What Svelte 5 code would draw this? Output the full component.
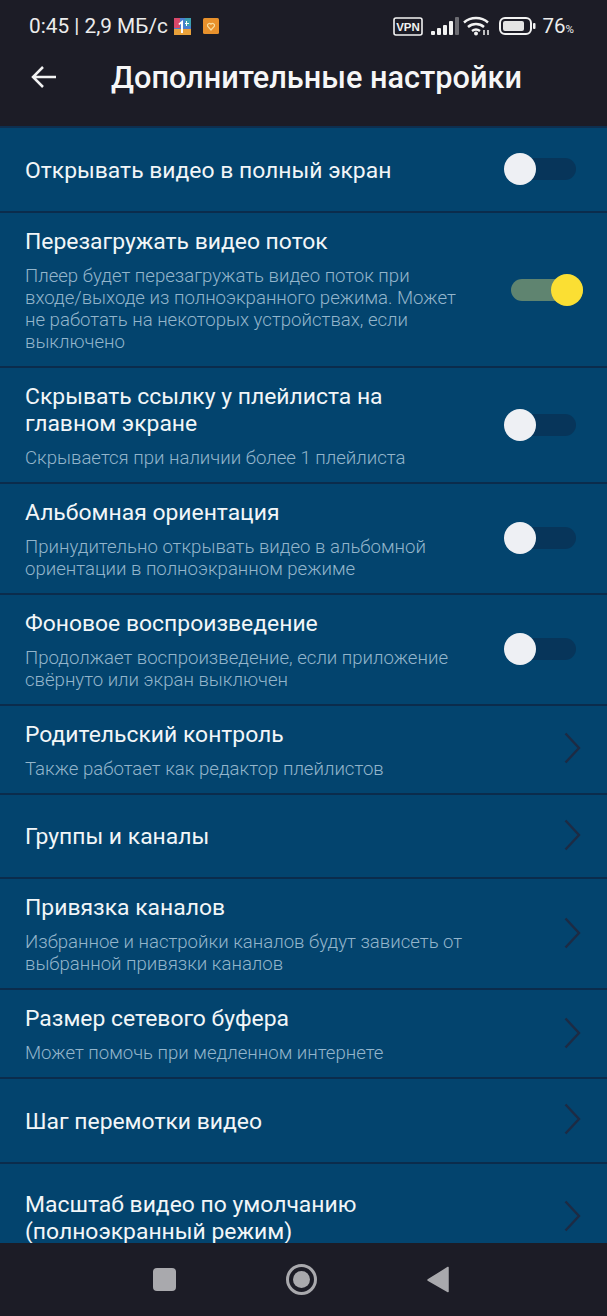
<script>
  const rows = [
    { t: 'Открывать видео в полный экран', sw: 'off' },
    { t: 'Перезагружать видео поток', s: 'Плеер будет перезагружать видео поток при входе/выходе из полноэкранного режима. Может не работать на некоторых устройствах, если выключено', sw: 'on' },
    { t: 'Скрывать ссылку у плейлиста на главном экране', s: 'Скрывается при наличии более 1 плейлиста', sw: 'off' },
    { t: 'Альбомная ориентация', s: 'Принудительно открывать видео в альбомной ориентации в полноэкранном режиме', sw: 'off' },
    { t: 'Фоновое воспроизведение', s: 'Продолжает воспроизведение, если приложение свёрнуто или экран выключен', sw: 'off' },
    { t: 'Родительский контроль', s: 'Также работает как редактор плейлистов' },
    { t: 'Группы и каналы' },
    { t: 'Привязка каналов', s: 'Избранное и настройки каналов будут зависеть от выбранной привязки каналов' },
    { t: 'Размер сетевого буфера', s: 'Может помочь при медленном интернете' },
    { t: 'Шаг перемотки видео' },
    { t: 'Масштаб видео по умолчанию (полноэкранный режим)', tall: true }
  ];
</script>

<div class="page">
  <header class="top">
    <div class="status">
      <div class="left">
        <span class="clock">0:45 | 2,9 МБ/с</span>
        <svg class="app1" width="17" height="17" viewBox="0 0 17 17">
          <rect width="17" height="17" rx="2" fill="#4a7fd0"/>
          <path d="M0 0h6v10H0z" fill="#d8486a"/>
          <path d="M11 0h6v8h-6z" fill="#3a9fb0"/>
          <path d="M0 11h17v6H0z" fill="#e9a13a"/>
          <path d="M4.500 5.500L9 2v13H7V6l-2 1z" fill="#fff"/>
          <path d="M12 3h1v2h2v1h-2v2h-1V6h-1V5h1z" fill="#fff"/>
        </svg>
        <svg class="app2" width="16" height="16" viewBox="0 0 16 16">
          <rect width="16" height="16" rx="1.500" fill="#e8912c"/>
          <path d="M8 12L4.600 8.200a2 2 0 0 1 3.400-2 2 2 0 0 1 3.400 2z" fill="none" stroke="#f7dc9c" stroke-width="1.200"/>
        </svg>
      </div>
      <div class="right">
        <svg class="vpn" width="30" height="19" viewBox="0 0 30 19">
          <rect x="1" y="1" width="28" height="17" rx="2" fill="none" stroke="#f2f2f2" stroke-width="1.600"/>
          <text x="15" y="13.500" text-anchor="middle" class="vpntext">VPN</text>
        </svg>
        <svg width="28" height="18" viewBox="0 0 28 18">
          <rect x="0" y="14" width="4" height="4" rx="1" fill="#f2f2f2"/>
          <rect x="6" y="11" width="4" height="7" rx="1" fill="#f2f2f2"/>
          <rect x="12" y="8" width="4" height="10" rx="1" fill="#f2f2f2"/>
          <rect x="18" y="4" width="4" height="14" rx="1" fill="#f2f2f2"/>
          <rect x="24" y="0" width="4" height="18" rx="1" fill="#6c6c72"/>
        </svg>
        <svg class="wifi" width="28" height="20" viewBox="0 0 28 20">
          <path d="M1 6.500C7.500 .5 18.500 .5 25 6.500" fill="none" stroke="#f2f2f2" stroke-width="2.400"/>
          <path d="M5 11c4.500-4 11.500-4 16 0" fill="none" stroke="#f2f2f2" stroke-width="2.400"/>
          <path d="M9 15c2.500-2 5.500-2 8 0" fill="none" stroke="#f2f2f2" stroke-width="2.400"/>
          <circle cx="13" cy="17.500" r="2" fill="#f2f2f2"/>
          <path d="M21 14v5M25 14v5" stroke="#f2f2f2" stroke-width="1.500"/>
        </svg>
        <svg class="batt" width="37" height="18" viewBox="0 0 37 18">
          <rect x="1" y="1" width="31" height="16" rx="5" fill="none" stroke="#f2f2f2" stroke-width="2"/>
          <rect x="4" y="4" width="21" height="10" rx="2" fill="#e4e4e4"/>
          <rect x="34" y="6" width="2.500" height="6" rx="1" fill="#f2f2f2"/>
        </svg>
        <span class="pct">76<small>%</small></span>
      </div>
    </div>
    <div class="bar">
      <svg class="arrow" width="26" height="24" viewBox="0 0 26 24">
        <path d="M25 12H2M12 2L2 12l10 10" fill="none" stroke="#f2f2f2" stroke-width="2.500"/>
      </svg>
      <h1>Дополнительные настройки</h1>
    </div>
  </header>

  <main class="list">
    {#each rows as r}
      <div class="row" class:tall={r.tall}>
        <div class="text">
          <div class="title">{r.t}</div>
          {#if r.s}<div class="sub">{r.s}</div>{/if}
        </div>
        {#if r.sw}
          <div class="switch {r.sw}"><span class="track"></span><span class="knob"></span></div>
        {:else}
          <svg class="chev" width="17" height="32" viewBox="0 0 17 32">
            <path d="M1.500 1.500L15 16 1.500 30.500" fill="none" stroke="#1d2b44" stroke-width="2.400"/>
          </svg>
        {/if}
      </div>
    {/each}
  </main>

  <nav class="nav">
    <span class="square"></span>
    <span class="circle"><span class="dot"></span></span>
    <svg width="22" height="27" viewBox="0 0 22 27">
      <path d="M21 1.500V25.500L1 14z" fill="#a9a9ad" stroke="#a9a9ad" stroke-width="1.500" stroke-linejoin="round"/>
    </svg>
  </nav>
</div>

<style>
  :global(body) { margin: 0; background: #1c1c26; }
  .page {
    width: 607px; height: 1316px; display: flex; flex-direction: column; overflow: hidden;
    font-family: Roboto, "Noto Sans", sans-serif; color: #f4f7f9;
  }
  .top { background: #1c1c26; height: 126px; flex: none; box-sizing: border-box; padding: 11px 0 0 29px; }
  .status { display: flex; justify-content: space-between; align-items: center; height: 30px; padding-right: 33px; }
  .left { display: flex; align-items: center; }
  .clock { font-size: 20.800px; font-weight: 400; color: #ececec; }
  .app1 { margin-left: 6px; }
  .app2 { margin-left: 12px; }
  .right { display: flex; align-items: center; gap: 7px; }
  .vpn { margin-right: 1px; }
  .vpntext { font: 700 11.500px "Liberation Sans", sans-serif; fill: #f2f2f2; }
  .wifi { margin-left: -3px; }
  .batt { margin-left: 1px; }
  .pct { font-size: 20.500px; color: #ececec; }
  .pct small { font-size: 11.500px; }
  .bar { display: flex; align-items: center; height: 64px; margin-top: 4px; }
  .arrow { flex: none; margin-left: 2px; }
  h1 { margin: 0 0 0 54px; font-size: 30.700px; font-weight: 500; white-space: nowrap; color: #f6f6f6; }
  .list { flex: 1; min-height: 0; overflow: hidden; background: #03446e; border-top: 2px solid #0d2f50; }
  .row {
    display: flex; align-items: center; justify-content: space-between; box-sizing: border-box;
    min-height: 84.500px; padding: 15px 26px 13px 25px; border-bottom: 2px solid #0b2c4c;
  }
  .row.tall { padding-top: 27px; }
  .text { width: 440px; }
  .title { font-size: 22.900px; line-height: 27px; color: #f2f6f8; }
  .sub { font-size: 18.600px; line-height: 22px; margin-top: 10px; color: #93b5cb; font-weight: 300; }
  .switch { position: relative; width: 72px; height: 32px; flex: none; }
  .track { position: absolute; left: 0; top: 5px; width: 72px; height: 22px; border-radius: 11px; }
  .off { margin: -2px 5px 0 0; }
  .off .track { background: #07355a; }
  .off .knob { left: 0; background: #eef0f4; }
  .on { margin-right: -2px; }
  .on .track { background: #5f8470; }
  .on .knob { right: 0; background: #fbdf33; }
  .knob { position: absolute; top: 0; width: 32px; height: 32px; border-radius: 50%; }
  .chev { flex: none; margin-top: -4px; }
  .nav { flex: none; height: 73px; background: #1c1c26; display: flex; align-items: center; padding: 0 0 1px 153px; box-sizing: border-box; }
  .square { width: 23px; height: 23px; border-radius: 4px; background: #a9a9ad; }
  .circle { width: 31px; height: 31px; box-sizing: border-box; border: 3px solid #a9a9ad; border-radius: 50%; display: flex; align-items: center; justify-content: center; margin-left: 110px; }
  .dot { width: 17px; height: 17px; border-radius: 50%; background: #a9a9ad; }
  .nav svg { margin-left: 110px; }
</style>
